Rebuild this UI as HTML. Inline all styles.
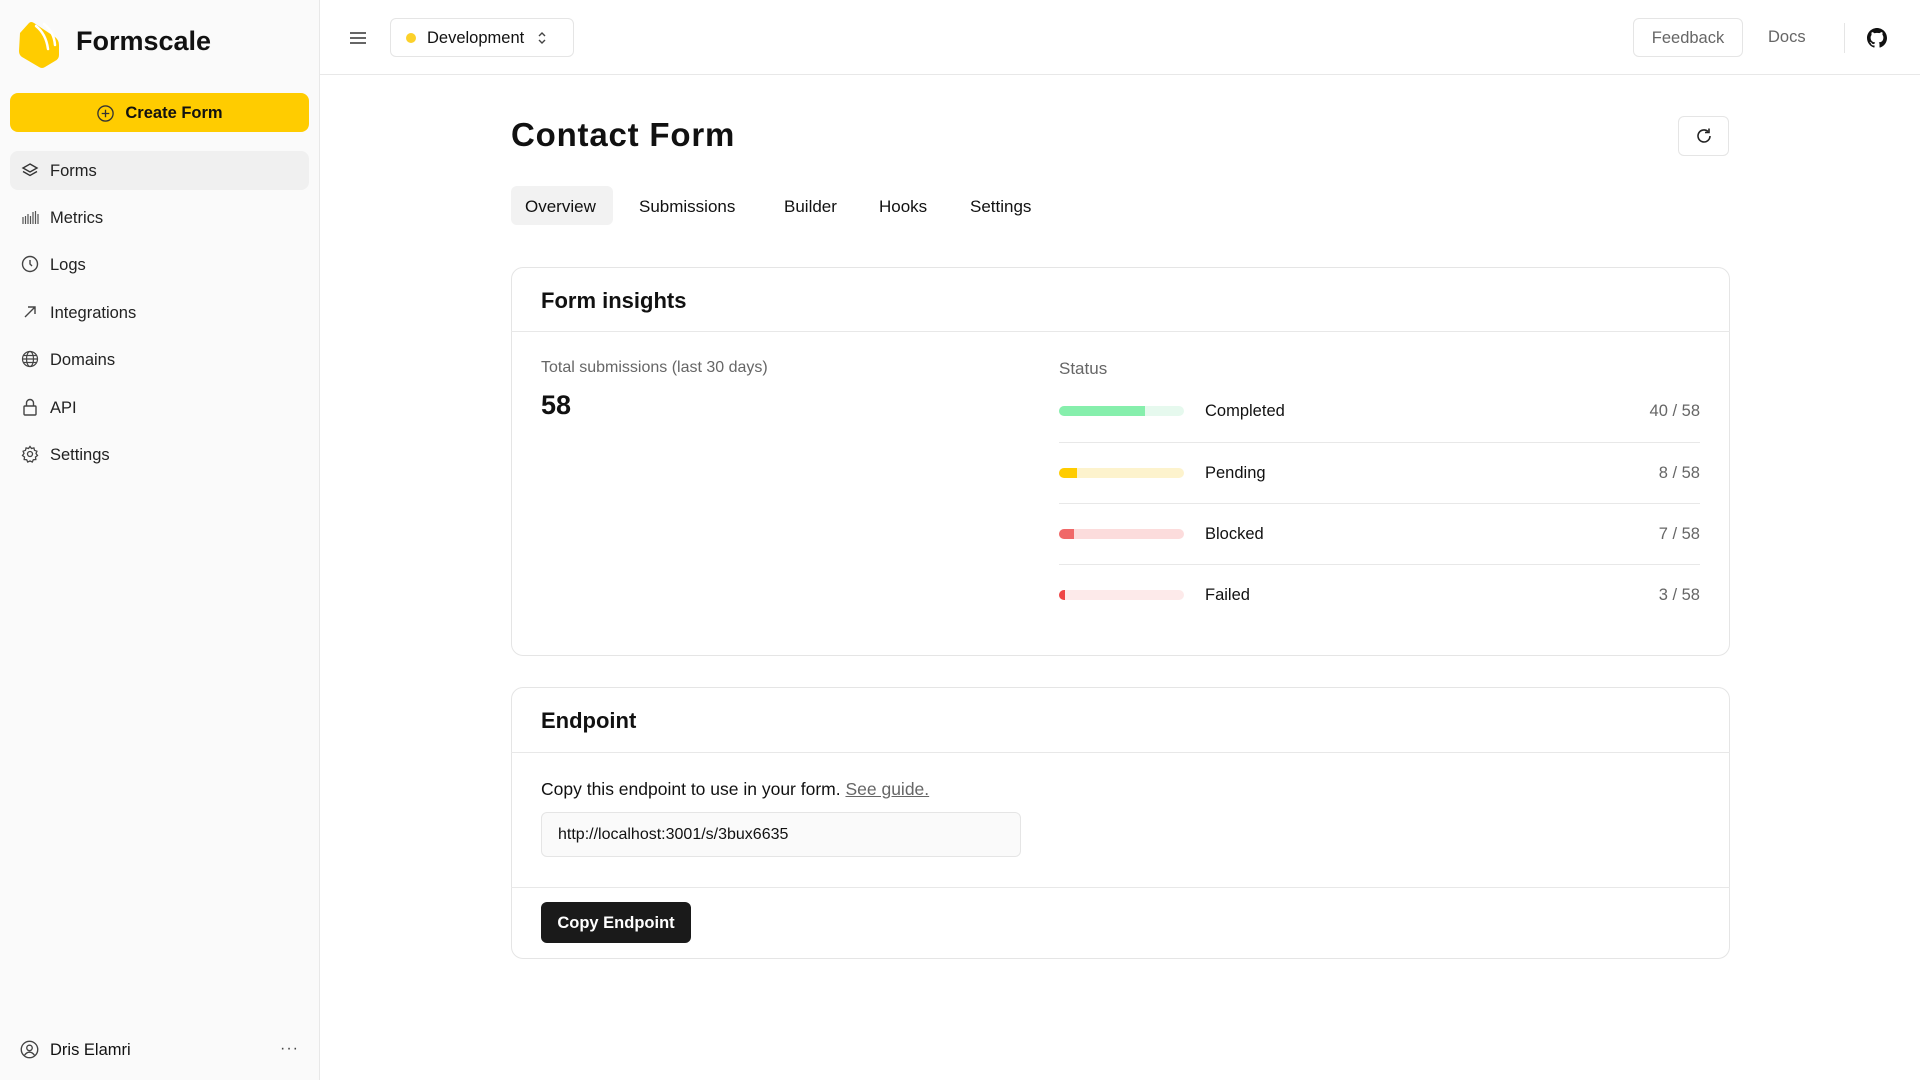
<!DOCTYPE html>
<html><head><meta charset="utf-8"><style>
*{box-sizing:border-box;margin:0;padding:0}
body{width:1920px;height:1080px;overflow:hidden;font-family:"Liberation Sans",sans-serif;color:#111;background:#fff;position:relative}
.abs{position:absolute}
.side{left:0;top:0;width:320px;height:1080px;background:#fafafa;border-right:1px solid #e8e8e8}
.nav{position:absolute;left:10px;width:299px;height:39px;border-radius:8px;display:flex;align-items:center;padding-left:40px;padding-top:2px;font-size:16.5px;color:#222}
.nav svg{position:absolute;left:11px;top:10px}
.card{border:1px solid #e5e5e5;border-radius:12px;background:#fff}
.row{position:absolute;left:1059px;width:641px;height:14px}
.bar{position:absolute;left:0;top:2px;width:125px;height:10px;border-radius:5px;overflow:hidden}
.bar i{display:block;height:100%}
.lbl{position:absolute;left:146px;top:-2px;font-size:16.5px}
.val{position:absolute;right:0;top:-2px;font-size:16.5px;color:#666}
.div{position:absolute;left:1059px;width:641px;height:1px;background:#e8e8e8}
</style></head><body>
<div class="abs side">
  <svg class="abs" style="left:17px;top:19px" width="44" height="50" viewBox="0 0 44 50"><path d="M3 14 L12 4 Q14 2 17 4 L38 18 Q42 21 42 26 L42 36 Q42 40 38 42 L28 48 Q25 50 22 48 L5 38 Q2 36 2 32 Z" fill="#ffcc00"/><path d="M19 7 Q29 15 31 30 M27 5 Q37 13 38 26" stroke="#fff" stroke-width="2.5" fill="none" stroke-linecap="round"/></svg>
  <div class="abs" style="left:76px;top:26px;font-size:27px;font-weight:bold;letter-spacing:0px">Formscale</div>
  <div class="abs" style="left:10px;top:93px;width:299px;height:39px;background:#ffcc00;border-radius:8px;display:flex;align-items:center;justify-content:center;font-weight:bold;font-size:16.5px;padding-top:1px">
    <svg width="19" height="19" viewBox="0 0 20 20" style="margin-right:10px"><circle cx="10" cy="10" r="8" fill="none" stroke="#333" stroke-width="1.4"/><path d="M10 6v8M6 10h8" stroke="#333" stroke-width="1.4"/></svg>Create Form</div>
  <div class="nav" style="top:151px;background:#f0f0f0">
    <svg width="18" height="18" viewBox="0 0 18 18" fill="none" stroke="#333" stroke-width="1.4"><path d="M9 3 L16 7 L9 11 L2 7 Z M2 10.5 L9 14.5 L16 10.5"/></svg>Forms</div>
  <div class="nav" style="top:198px">
    <svg width="18" height="18" viewBox="0 0 18 18" stroke="#555" stroke-width="1.2"><path d="M2 9v7M4.5 8v8M7 6v10M9.5 8v8M12 4v12M14.5 3v13M17 6v10"/></svg>Metrics</div>
  <div class="nav" style="top:245px">
    <svg width="18" height="18" viewBox="0 0 18 18" fill="none" stroke="#444" stroke-width="1.4"><circle cx="9" cy="9" r="7.5"/><path d="M9 5v4l2 2"/></svg>Logs</div>
  <div class="nav" style="top:293px">
    <svg width="18" height="18" viewBox="0 0 18 18" fill="none" stroke="#444" stroke-width="1.4"><path d="M4 14L14 4M7 4h7v7"/></svg>Integrations</div>
  <div class="nav" style="top:340px">
    <svg width="18" height="18" viewBox="0 0 18 18" fill="none" stroke="#444" stroke-width="1.2"><circle cx="9" cy="9" r="7.5"/><ellipse cx="9" cy="9" rx="3.5" ry="7.5"/><path d="M1.5 9h15M2.5 5.5h13M2.5 12.5h13"/></svg>Domains</div>
  <div class="nav" style="top:388px">
    <svg width="18" height="18" viewBox="0 0 18 18" fill="none" stroke="#444" stroke-width="1.4"><rect x="3" y="8" width="12" height="9" rx="1"/><path d="M5.5 8V5a3.5 3.5 0 0 1 7 0v3"/></svg>API</div>
  <div class="nav" style="top:435px">
    <svg width="18" height="18" viewBox="0 0 18 18" fill="none" stroke="#444" stroke-width="1.3"><circle cx="9" cy="9" r="2.5"/><path d="M9 1.5l1.5 2 2.4-.6.6 2.4 2.4.9-.9 2.3 1.5 2-2 1.5.3 2.5-2.5.2-1 2.3-2.3-1-2.3 1-1-2.3-2.5-.2.3-2.5-2-1.5 1.5-2-.9-2.3 2.4-.9.6-2.4 2.4.6z"/></svg>Settings</div>
  <svg class="abs" style="left:20px;top:1040px" width="19" height="19" viewBox="0 0 18 18" fill="none" stroke="#444" stroke-width="1.3"><circle cx="9" cy="9" r="7.8"/><circle cx="9" cy="7.5" r="2.6"/><path d="M4.3 14.5c1.2-2 2.8-3 4.7-3s3.5 1 4.7 3"/></svg>
  <div class="abs" style="left:50px;top:1041px;font-size:16.5px">Dris Elamri</div>
  <div class="abs" style="left:280px;top:1040px;font-size:16px;color:#444;letter-spacing:1px">···</div>
</div>
<div class="abs" style="left:320px;top:74px;width:1600px;height:1px;background:#e8e8e8"></div>
<svg class="abs" style="left:349px;top:30px" width="18" height="16" viewBox="0 0 18 16" stroke="#333" stroke-width="1.6"><path d="M1 3h16M1 8h16M1 13h16"/></svg>
<div class="abs" style="left:390px;top:18px;width:184px;height:39px;border:1px solid #e5e5e5;border-radius:6px;display:flex;align-items:center;font-size:16.5px;padding-top:1px">
  <span style="width:10px;height:10px;border-radius:50%;background:#fcd12a;margin-left:15px;margin-right:11px"></span>Development
  <svg width="10" height="16" viewBox="0 0 10 16" style="margin-left:13px" fill="none" stroke="#444" stroke-width="1.4"><path d="M2 6l3-3 3 3M2 10l3 3 3-3"/></svg></div>
<div class="abs" style="left:1633px;top:18px;width:110px;height:39px;border:1px solid #e5e5e5;border-radius:6px;display:flex;align-items:center;justify-content:center;font-size:16.5px;color:#666;padding-top:1px">Feedback</div>
<div class="abs" style="left:1768px;top:28px;font-size:16.5px;color:#666">Docs</div>
<div class="abs" style="left:1844px;top:23px;width:1px;height:30px;background:#e5e5e5"></div>
<svg class="abs" style="left:1867px;top:28px" width="20" height="20" viewBox="0 0 16 16"><path fill="#111" d="M8 0C3.58 0 0 3.58 0 8c0 3.540 2.29 6.53 5.47 7.59.4.07.55-.17.55-.38v-1.33c-2.23.48-2.7-1.07-2.7-1.07-.36-.93-.89-1.17-.89-1.17-.73-.5.05-.49.05-.49.8.06 1.230.83 1.23.83.72 1.23 1.87.87 2.33.66.07-.52.28-.87.5-1.07-1.78-.2-3.64-.89-3.64-3.950 0-.87.31-1.59.82-2.15-.08-.2-.36-1.02.08-2.12 0 0 .67-.21 2.2.82A7.6 7.6 0 0 1 8 3.86c.68 0 1.36.09 2 .27 1.53-1.04 2.2-.82 2.2-.82.44 1.1.16 1.92.08 2.12.51.56.82 1.27.82 2.15 0 3.07-1.87 3.75-3.65 3.95.29.25.54.73.54 1.48v2.2c0 .21.15.46.55.38A8.01 8.01 0 0 0 16 8c0-4.42-3.58-8-8-8z"/></svg>

<div class="abs" style="left:511px;top:116px;font-size:33px;font-weight:bold;letter-spacing:0.8px">Contact Form</div>
<div class="abs" style="left:1678px;top:116px;width:51px;height:40px;border:1px solid #e5e5e5;border-radius:6px"></div>
<svg class="abs" style="left:1694px;top:126px" width="20" height="20" viewBox="0 0 20 20" fill="none" stroke="#222" stroke-width="1.6"><path d="M16 10a6 6 0 1 1-2-4.5"/><path d="M15 2.5v4h-4"/></svg>
<div class="abs" style="left:511px;top:186px;width:102px;height:39px;background:#f2f2f2;border-radius:6px"></div>
<div class="abs" style="left:525px;top:197px;font-size:17px">Overview</div>
<div class="abs" style="left:639px;top:197px;font-size:17px">Submissions</div>
<div class="abs" style="left:784px;top:197px;font-size:17px">Builder</div>
<div class="abs" style="left:879px;top:197px;font-size:17px">Hooks</div>
<div class="abs" style="left:970px;top:197px;font-size:17px">Settings</div>

<div class="abs card" style="left:511px;top:267px;width:1219px;height:389px"></div>
<div class="abs" style="left:511px;top:331px;width:1219px;height:1px;background:#e8e8e8"></div>
<div class="abs" style="left:541px;top:288px;font-size:22px;font-weight:bold">Form insights</div>
<div class="abs" style="left:541px;top:359px;font-size:16px;color:#666">Total submissions (last 30 days)</div>
<div class="abs" style="left:541px;top:390px;font-size:27px;font-weight:bold">58</div>
<div class="abs" style="left:1059px;top:359px;font-size:17px;color:#666">Status</div>
<div class="row" style="top:404px"><div class="bar" style="background:#e6f9ee"><i style="width:69%;background:#86efac"></i></div><span class="lbl">Completed</span><span class="val">40 / 58</span></div>
<div class="div" style="top:442px"></div>
<div class="row" style="top:466px"><div class="bar" style="background:#fdf3cd"><i style="width:14%;background:#ffcc00"></i></div><span class="lbl">Pending</span><span class="val">8 / 58</span></div>
<div class="div" style="top:503px"></div>
<div class="row" style="top:527px"><div class="bar" style="background:#fcdcdc"><i style="width:12%;background:#f06868"></i></div><span class="lbl">Blocked</span><span class="val">7 / 58</span></div>
<div class="div" style="top:564px"></div>
<div class="row" style="top:588px"><div class="bar" style="background:#fdeaea"><i style="width:5%;background:#ef4444"></i></div><span class="lbl">Failed</span><span class="val">3 / 58</span></div>

<div class="abs card" style="left:511px;top:687px;width:1219px;height:272px"></div>
<div class="abs" style="left:511px;top:752px;width:1219px;height:1px;background:#e8e8e8"></div>
<div class="abs" style="left:511px;top:887px;width:1219px;height:1px;background:#e8e8e8"></div>
<div class="abs" style="left:541px;top:708px;font-size:22px;font-weight:bold">Endpoint</div>
<div class="abs" style="left:541px;top:779px;font-size:17.5px">Copy this endpoint to use in your form. <span style="color:#666;text-decoration:underline">See guide.</span></div>
<div class="abs" style="left:541px;top:812px;width:480px;height:45px;background:#fafafa;border:1px solid #e5e5e5;border-radius:6px;padding-left:16px;padding-top:1px;display:flex;align-items:center;font-size:16px">http://localhost:3001/s/3bux6635</div>
<div class="abs" style="left:541px;top:902px;width:150px;height:41px;background:#1a1a1a;border-radius:6px;color:#fff;font-weight:bold;font-size:16.5px;display:flex;align-items:center;justify-content:center;padding-top:1px">Copy Endpoint</div>
</body></html>
